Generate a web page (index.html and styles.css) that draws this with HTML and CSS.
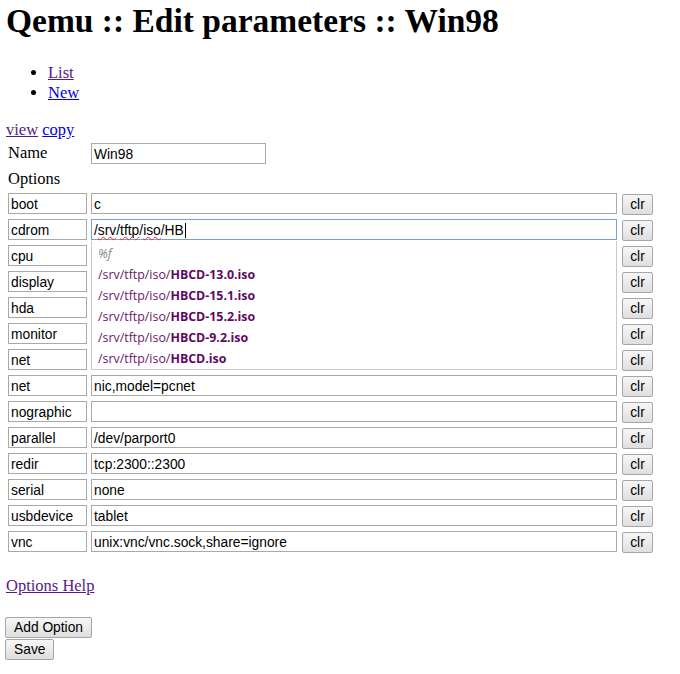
FILE: index.html
```html
<!DOCTYPE html>
<html>
<head>
<meta charset="utf-8">
<title>Qemu :: Edit parameters :: Win98</title>
<link rel="stylesheet" href="styles.css">
</head>
<body>
<h1>Qemu :: Edit parameters :: Win98</h1>
<ul class="nav">
  <li><a class="visited" href="#">List</a></li>
  <li><a href="#">New</a></li>
</ul>
<div class="actions"><a class="visited" href="#">view</a> <a href="#">copy</a></div>
<table class="form">
  <tr class="row-name">
    <td class="label-cell"><span class="label">Name</span></td>
    <td colspan="2"><input class="field name-field" type="text" value="Win98"></td>
  </tr>
  <tr class="row-head">
    <td colspan="3"><span class="label">Options</span></td>
  </tr>
  <tr><td class="label-cell"><input class="field key" value="boot"></td><td class="val-cell"><input class="field val" value="c"></td><td><button class="clr">clr</button></td></tr>
  <tr><td class="label-cell"><input class="field key" value="cdrom"></td><td class="val-cell">
    <div class="combo">
      <div class="field val focused"><span class="sq">/<span class="typo">srv</span>/<span class="typo">tftp</span>/<span class="typo">iso</span>/HB</span><span class="caret"></span></div>
      <div class="suggest">
        <div class="opt hint">%f</div>
        <div class="opt">/srv/tftp/iso/<b>HBCD-13.0.iso</b></div>
        <div class="opt">/srv/tftp/iso/<b>HBCD-15.1.iso</b></div>
        <div class="opt">/srv/tftp/iso/<b>HBCD-15.2.iso</b></div>
        <div class="opt">/srv/tftp/iso/<b>HBCD-9.2.iso</b></div>
        <div class="opt">/srv/tftp/iso/<b>HBCD.iso</b></div>
      </div>
    </div>
  </td><td><button class="clr">clr</button></td></tr>
  <tr><td class="label-cell"><input class="field key" value="cpu"></td><td class="val-cell"><input class="field val" value=""></td><td><button class="clr">clr</button></td></tr>
  <tr><td class="label-cell"><input class="field key" value="display"></td><td class="val-cell"><input class="field val" value=""></td><td><button class="clr">clr</button></td></tr>
  <tr><td class="label-cell"><input class="field key" value="hda"></td><td class="val-cell"><input class="field val" value=""></td><td><button class="clr">clr</button></td></tr>
  <tr><td class="label-cell"><input class="field key" value="monitor"></td><td class="val-cell"><input class="field val" value=""></td><td><button class="clr">clr</button></td></tr>
  <tr><td class="label-cell"><input class="field key" value="net"></td><td class="val-cell"><input class="field val" value=""></td><td><button class="clr">clr</button></td></tr>
  <tr><td class="label-cell"><input class="field key" value="net"></td><td class="val-cell"><input class="field val" value="nic,model=pcnet"></td><td><button class="clr">clr</button></td></tr>
  <tr><td class="label-cell"><input class="field key" value="nographic"></td><td class="val-cell"><input class="field val" value=""></td><td><button class="clr">clr</button></td></tr>
  <tr><td class="label-cell"><input class="field key" value="parallel"></td><td class="val-cell"><input class="field val" value="/dev/parport0"></td><td><button class="clr">clr</button></td></tr>
  <tr><td class="label-cell"><input class="field key" value="redir"></td><td class="val-cell"><input class="field val" value="tcp:2300::2300"></td><td><button class="clr">clr</button></td></tr>
  <tr><td class="label-cell"><input class="field key" value="serial"></td><td class="val-cell"><input class="field val" value="none"></td><td><button class="clr">clr</button></td></tr>
  <tr><td class="label-cell"><input class="field key" value="usbdevice"></td><td class="val-cell"><input class="field val" value="tablet"></td><td><button class="clr">clr</button></td></tr>
  <tr><td class="label-cell"><input class="field key" value="vnc"></td><td class="val-cell"><input class="field val" value="unix:vnc/vnc.sock,share=ignore"></td><td><button class="clr">clr</button></td></tr>
</table>
<div class="help"><a class="visited" href="#">Options Help</a></div>
<div class="buttons">
  <button class="btn">Add Option</button>
  <button class="btn">Save</button>
</div>
</body>
</html>
```
FILE: styles.css
```css
html, body {
  background: #fff;
}
body {
  margin: 0;
  padding: 0 6px;
  font-family: "Liberation Serif", "Times New Roman", serif;
  font-size: 16.5px;
  color: #000;
}
a {
  color: #0000ee;
  text-decoration: underline;
}
a.visited {
  color: #551a8b;
}
h1 {
  font-size: 33.5px;
  font-weight: bold;
  line-height: 37px;
  margin: 2px 0 0;
}
.nav {
  margin: 24px 0 0;
  padding-left: 42px;
}
.nav li {
  line-height: 20px;
}
.actions {
  margin-top: 18px;
  line-height: 18px;
}
table.form {
  border-collapse: separate;
  border-spacing: 2px;
  margin-top: 1px;
}
table.form td {
  padding: 0;
  height: 24px;
  vertical-align: top;
}
table.form .label-cell {
  width: 81px;
}
table.form .val-cell {
  width: 529px;
}
table.form .row-head td {
  height: 22px;
}
.label {
  display: block;
  line-height: 18px;
}
.row-name .label {
  padding-top: 2px;
}
.row-head .label {
  padding-top: 2px;
}
.field {
  display: block;
  box-sizing: border-box;
  height: 21px;
  margin: 1px 0 0;
  padding: 2px 2px 0;
  border: 1px solid #a9a9a9;
  font-family: "Liberation Sans", Arial, sans-serif;
  font-size: 13.8px;
  color: #000;
  background: #fff;
  outline: none;
}
.key {
  width: 79px;
}
.val {
  width: 526px;
}
.name-field {
  width: 175px;
}
.combo {
  position: relative;
}
.focused {
  border-color: #77a1dc;
  line-height: 17px;
  white-space: nowrap;
}
.typo {
  text-decoration: underline wavy #e0301e;
  text-decoration-thickness: 1px;
  text-underline-offset: 1px;
}
.caret {
  display: inline-block;
  width: 1px;
  height: 15px;
  background: #000;
  vertical-align: -3px;
  margin-left: 1px;
}
.suggest {
  position: absolute;
  left: 0;
  top: 22px;
  width: 526px;
  box-sizing: border-box;
  background: #fff;
  border: 1px solid #c9c9c9;
  border-top: none;
  padding-top: 2px;
  z-index: 2;
}
.opt {
  height: 21px;
  line-height: 21px;
  padding-left: 6px;
  font-family: "Open Sans", "Noto Sans", sans-serif;
  font-size: 12.4px;
  color: #6a176a;
  white-space: nowrap;
}
.opt b {
  font-weight: bold;
  color: #5e0a5e;
}
.opt.hint {
  color: #8a8a8a;
  font-style: italic;
}
button {
  font-family: "Liberation Sans", Arial, sans-serif;
  font-size: 13.8px;
  color: #000;
  box-sizing: border-box;
  height: 21px;
  padding: 0 8px;
  border: 1px solid #a6a6a6;
  border-radius: 2px;
  background: linear-gradient(#f7f7f7, #dedede);
  margin: 0;
}
.clr {
  display: block;
  width: 31px;
  padding: 0;
  margin-top: 2px;
}
.help {
  margin-top: 21px;
  line-height: 18px;
}
.buttons {
  margin-top: 22px;
  margin-left: -1px;
}
.btn {
  display: block;
  margin-bottom: 1px;
}
```
